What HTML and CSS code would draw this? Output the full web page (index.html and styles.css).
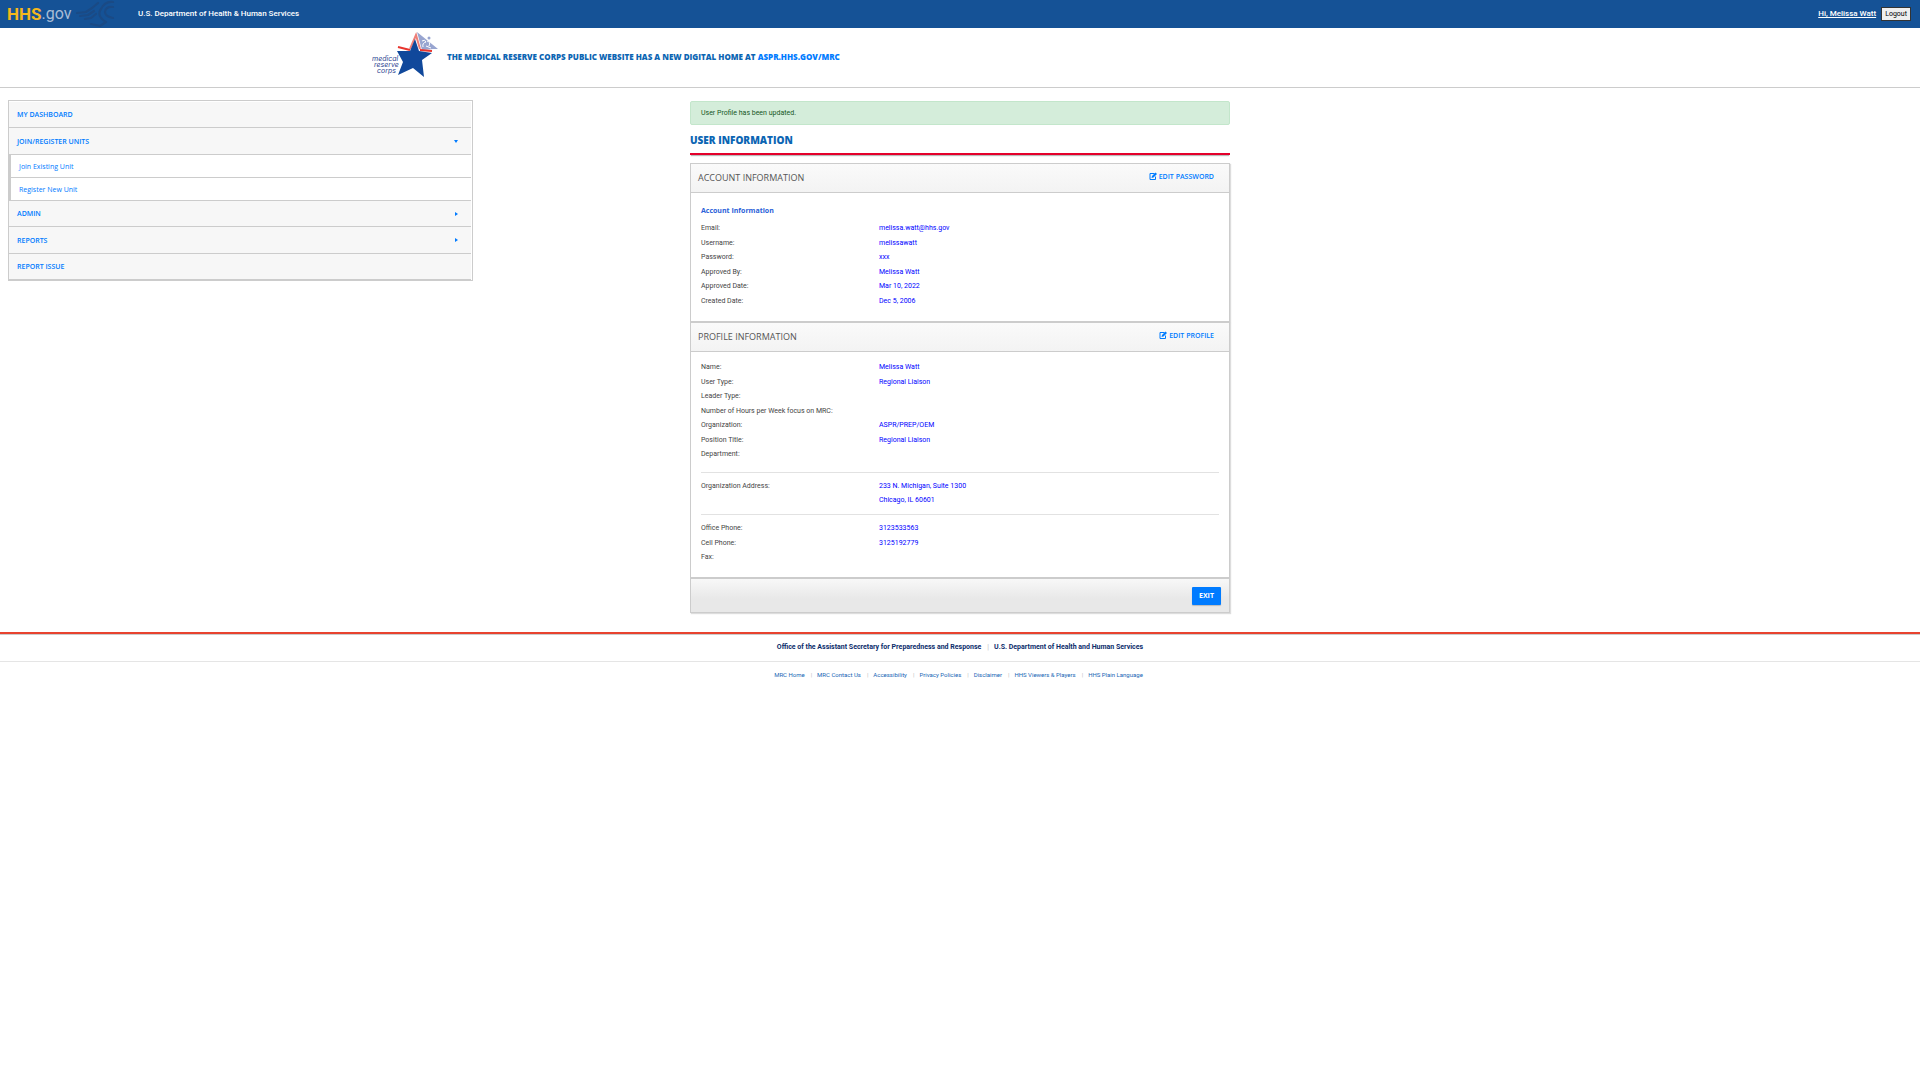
FILE: index.html
```
<!DOCTYPE html>
<html lang="en">
<head>
    <meta charset="UTF-8">
    <meta name="viewport" content="width=device-width, initial-scale=1.0">
    <title>User Information - Medical Reserve Corps</title>
    <link rel="stylesheet" href="styles.css">
</head>
<body>

<header class="topbar">
    <a class="hhs-logo" href="#"><b>HHS</b><span>.gov</span></a>
    <svg class="hhs-eagle" viewBox="0 0 40 28" width="40" height="28" aria-hidden="true">
        <g fill="none" stroke="#1a4a85" stroke-width="2.2" stroke-linecap="round" stroke-linejoin="round">
            <path d="M1 13 L10 12 L16 8 L22 3"/>
            <path d="M4 16 L12 15 L18 11"/>
            <path d="M9 19 L15 18 L20 14"/>
            <path d="M37 2 C31 1 27 5 25 9 C22 13 23 18 30 22 L24 26 L15 24"/>
            <path d="M37 7 C32 6 29 9 29 12 C29 15 32 17 37 18"/>
        </g>
    </svg>
    <a class="department" href="#">U.S. Department of Health &amp; Human Services</a>
    <div class="user">
        <a href="#">Hi, Melissa Watt</a>
        <button type="button" class="logout">Logout</button>
    </div>
</header>

<div class="banner">
    <svg class="mrc-logo" viewBox="0 0 67 48" width="67" height="48" role="img" aria-label="Medical Reserve Corps">
        <!-- caduceus triangle -->
        <path d="M45 0 L66 17 L61 17 L50 18 Z" fill="#98a5d0"/>
        <path d="M50 9 q3 -2 4 1 q-4 1 -3 5 M55 9 q4 1 2 5 M54 14 l5 2" fill="none" stroke="#fff" stroke-width="1"/>
        <circle cx="57" cy="6" r="1.5" fill="#98a5d0"/>
        <!-- red outline -->
        <path d="M26 15 L38 18 M48 18 L60 19" fill="none" stroke="#e8352e" stroke-width="2"/>
        <path d="M38 17 L44 3 L48 17" fill="none" stroke="#ee7f78" stroke-width="2"/>
        <!-- star -->
        <path d="M43 7 L47 19 L60 21 L50 28 L52 45 L41 36 L26 43 L31 30 L25 19 L38 19 Z" fill="#10489b"/>
        <g fill="#2c4390" font-family="Inter, sans-serif" font-style="italic" font-size="7">
            <text x="0" y="29">medical</text>
            <text x="2" y="35">reserve</text>
            <text x="5" y="41">corps</text>
        </g>
    </svg>
    <p class="notice">THE MEDICAL RESERVE CORPS PUBLIC WEBSITE HAS A NEW DIGITAL HOME AT <a href="#">ASPR.HHS.GOV/MRC</a></p>
</div>

<div class="page">
    <!-- Left menu -->
    <nav class="menu">
        <a class="menu-item" href="#">MY DASHBOARD</a>
        <a class="menu-item" href="#">JOIN/REGISTER UNITS <span class="arrow arrow-down"></span></a>
        <div class="submenu">
            <a href="#">Join Existing Unit</a>
            <a href="#">Register New Unit</a>
        </div>
        <a class="menu-item" href="#">ADMIN <span class="arrow arrow-right"></span></a>
        <a class="menu-item" href="#">REPORTS <span class="arrow arrow-right"></span></a>
        <a class="menu-item" href="#">REPORT ISSUE</a>
    </nav>

    <main class="content">
        <div class="alert">User Profile has been updated.</div>
        <h1>USER INFORMATION</h1>

        <section class="card">
            <div class="card-header">
                <h2>ACCOUNT INFORMATION</h2>
                <a class="edit" href="#">
                    <svg viewBox="0 0 16 16" width="8" height="8" aria-hidden="true">
                        <path d="M11 3 H2 V15 H13 V9" fill="none" stroke="currentColor" stroke-width="2"/>
                        <path d="M5 12 L6 8 L13 1 L16 4 L9 11 Z" fill="currentColor"/>
                    </svg>
                    EDIT PASSWORD
                </a>
            </div>
            <div class="card-body">
                <h3>Account Information</h3>
                <dl>
                    <div><dt>Email:</dt><dd>melissa.watt@hhs.gov</dd></div>
                    <div><dt>Username:</dt><dd>melissawatt</dd></div>
                    <div><dt>Password:</dt><dd>xxx</dd></div>
                    <div><dt>Approved By:</dt><dd>Melissa Watt</dd></div>
                    <div><dt>Approved Date:</dt><dd>Mar 10, 2022</dd></div>
                    <div><dt>Created Date:</dt><dd>Dec 5, 2006</dd></div>
                </dl>
            </div>
        </section>

        <section class="card">
            <div class="card-header">
                <h2>PROFILE INFORMATION</h2>
                <a class="edit" href="#">
                    <svg viewBox="0 0 16 16" width="8" height="8" aria-hidden="true">
                        <path d="M11 3 H2 V15 H13 V9" fill="none" stroke="currentColor" stroke-width="2"/>
                        <path d="M5 12 L6 8 L13 1 L16 4 L9 11 Z" fill="currentColor"/>
                    </svg>
                    EDIT PROFILE
                </a>
            </div>
            <div class="card-body card-body-tight">
                <dl>
                    <div><dt>Name:</dt><dd>Melissa Watt</dd></div>
                    <div><dt>User Type:</dt><dd>Regional Liaison</dd></div>
                    <div><dt>Leader Type:</dt><dd></dd></div>
                    <div><dt>Number of Hours per Week focus on MRC:</dt><dd></dd></div>
                    <div><dt>Organization:</dt><dd>ASPR/PREP/OEM</dd></div>
                    <div><dt>Position Title:</dt><dd>Regional Liaison</dd></div>
                    <div><dt>Department:</dt><dd></dd></div>
                </dl>
                <hr class="after-details">
                <dl>
                    <div><dt>Organization Address:</dt><dd>233 N. Michigan, Suite 1300<br>Chicago, IL 60601</dd></div>
                </dl>
                <hr>
                <dl>
                    <div><dt>Office Phone:</dt><dd>3123533563</dd></div>
                    <div><dt>Cell Phone:</dt><dd>3125192779</dd></div>
                    <div><dt>Fax:</dt><dd></dd></div>
                </dl>
            </div>
            <div class="card-footer">
                <button type="button" class="exit">EXIT</button>
            </div>
        </section>
    </main>
</div>

<footer class="footer">
    <div class="footer-offices">
        <a href="#">Office of the Assistant Secretary for Preparedness and Response</a>
        <a href="#">U.S. Department of Health and Human Services</a>
    </div>
    <div class="footer-links">
        <a href="#">MRC Home</a>
        <a href="#">MRC Contact Us</a>
        <a href="#">Accessibility</a>
        <a href="#">Privacy Policies</a>
        <a href="#">Disclaimer</a>
        <a href="#">HHS Viewers &amp; Players</a>
        <a href="#">HHS Plain Language</a>
    </div>
</footer>

</body>
</html>
```
FILE: styles.css
```
* {
    box-sizing: border-box;
}

body {
    margin: 0;
    background-color: #fff;
    color: #444;
    font-family: Roboto, sans-serif;
    font-size: 7px;
}

a {
    color: #007bff;
    text-decoration: none;
}

h1, h2, h3, p, dl, dd {
    margin: 0;
}

/* Top bar */
.topbar {
    display: flex;
    align-items: center;
    height: 28px;
    padding: 0 9px 1px 7px;
    background-color: #155296;
}

.hhs-logo {
    display: flex;
    width: 69px;
    font-size: 17px;
    line-height: 28px;
    color: #a9bdd6;
}

.hhs-logo b {
    color: #f5b81c;
}

.hhs-logo span {
    font-size: 16px;
}

.department {
    margin-left: 22px;
    color: #fff;
    font-weight: 500;
    font-size: 8px;
}

.user {
    display: flex;
    align-items: center;
    gap: 5px;
    margin-left: auto;
}

.user a {
    color: #fff;
    font-weight: 500;
    font-size: 8px;
    text-decoration: underline;
}

.logout {
    height: 14px;
    padding: 0 3px;
    border: 1px solid #333;
    background-color: #efefef;
    color: #000;
    font-family: Roboto, sans-serif;
    font-size: 7px;
}

/* Site banner */
.banner {
    display: flex;
    align-items: center;
    height: 60px;
    padding-bottom: 3px;
    padding-left: calc(50% - 588px);
    border-bottom: 1px solid #ccc;
}

.notice {
    margin-left: 8px;
    color: #0b65b3;
    font-family: "Open Sans", sans-serif;
    font-size: 8px;
    font-weight: 800;
}

/* Page columns */
.page {
    display: grid;
    grid-template-columns: 1fr minmax(0, 540px) 1fr;
    align-items: start;
    padding: 12px 8px 0;
}

.menu {
    width: 68.2%;
    padding: 1px 1px 0 0;
    border: 1px solid #ccc;
    font-family: "Open Sans", sans-serif;
}

.menu-item {
    display: flex;
    align-items: center;
    justify-content: space-between;
    height: 26px;
    padding: 0 13px 0 8px;
    border-bottom: 1px solid #ccc;
    background-color: #f7f7f7;
    font-weight: 600;
}

.menu-item:nth-child(3n+2) {
    height: 27px;
}

.submenu {
    border-left: 2px solid #ccc;
}

.submenu a {
    display: flex;
    align-items: center;
    height: 23px;
    padding-left: 8px;
    border-bottom: 1px solid #ccc;
}

.arrow {
    border: 2px solid transparent;
}

.arrow-down {
    border-top: 3px solid #007bff;
    border-bottom: 0;
}

.arrow-right {
    border-left: 3px solid #007bff;
    border-right: 0;
}

.content {
    padding-top: 1px;
}

.alert {
    height: 24px;
    padding: 0 10px;
    border: 1px solid #c3e6cb;
    border-radius: 2px;
    background-color: #d4edda;
    color: #155724;
    line-height: 22px;
}

h1 {
    margin: 4px 0 8px;
    padding-bottom: 2px;
    border-bottom: 2px solid #e4002b;
    box-shadow: 0 2px 1px -1px #bbb;
    color: #0b65b3;
    font-family: "Open Sans", sans-serif;
    font-size: 10px;
    font-weight: 800;
    line-height: 22px;
}

/* Cards */
.card {
    border: 1px solid #ccc;
    box-shadow: 1px 1px 1px #ddd;
}

.card-header {
    display: flex;
    justify-content: space-between;
    height: 29px;
    padding: 0 15px 0 7px;
    border-bottom: 1px solid #ccc;
    background: linear-gradient(#fafafa, #f3f3f3);
    font-family: "Open Sans", sans-serif;
}

h2 {
    color: #555;
    font-size: 9px;
    font-weight: 400;
    line-height: 28px;
}

.edit {
    display: flex;
    align-items: center;
    gap: 2px;
    height: 24px;
    font-weight: 600;
}

.card-body {
    padding: 12px 10px 13px;
}

.card-body-tight {
    padding-top: 8px;
}

h3 {
    margin-bottom: 5px;
    color: #2b5fd9;
    font-family: "Open Sans", sans-serif;
    font-size: 7px;
    font-weight: 700;
    line-height: 11px;
}

dl {
    line-height: 14px;
}

dl div {
    display: grid;
    grid-template-columns: 178px 1fr;
}

dl div:nth-child(even) {
    margin-top: 1px;
}

dd {
    color: #0000ff;
}

hr {
    margin: 7px 0 6px;
    border: 0;
    border-top: 1px solid #e2e2e2;
}

.after-details {
    margin-top: 11px;
}

.card-footer {
    display: flex;
    align-items: center;
    justify-content: flex-end;
    height: 35px;
    padding-right: 8px;
    border-top: 2px solid #ccc;
    background: linear-gradient(#f8f8f8, #e8e8e8 60%);
}

.exit {
    height: 18px;
    padding: 0 7px;
    border: 0;
    border-radius: 1px;
    background-color: #007bff;
    box-shadow: 0 1px 1px #bbb;
    color: #fff;
    font-family: "Open Sans", sans-serif;
    font-size: 7px;
    font-weight: 700;
}

/* Footer */
.footer {
    margin-top: 19px;
    border-top: 2px solid #e8432f;
    box-shadow: inset 0 1px #ccc;
    font-size: 6px;
}

.footer-offices, .footer-links {
    display: flex;
    justify-content: center;
    line-height: 27px;
}

.footer-offices {
    border-bottom: 1px solid #e5e5e5;
    font-size: 7px;
}

.footer-links {
    padding-right: 3px;
    line-height: 25px;
}

.footer a + a::before {
    content: "|";
    margin: 0 5px 0 6px;
    color: #bbb;
    font-weight: 400;
}

.footer-offices a {
    color: #0b2c6b;
    font-weight: 700;
}

.footer-links a {
    color: #1565b5;
}
```
